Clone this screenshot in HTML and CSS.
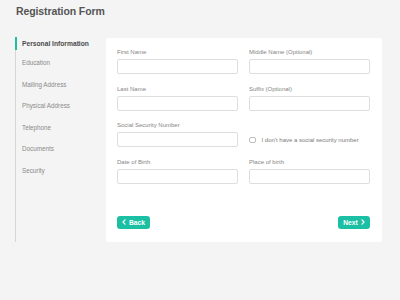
FILE: index.html
```html
<!DOCTYPE html>
<html>
<head>
<meta charset="utf-8">
<link rel="stylesheet" href="styles.css">
</head>
<body>
<h1 class="title">Registration Form</h1>
<div class="main">
  <nav class="sidebar">
    <div class="nav-item active">Personal Information</div>
    <div class="nav-item">Education</div>
    <div class="nav-item">Mailing Address</div>
    <div class="nav-item">Physical Address</div>
    <div class="nav-item">Telephone</div>
    <div class="nav-item">Documents</div>
    <div class="nav-item">Security</div>
  </nav>
  <section class="card">
    <div class="grid">
      <div class="field"><label class="label">First Name</label><div class="input"></div></div>
      <div class="field"><label class="label">Middle Name (Optional)</label><div class="input"></div></div>
      <div class="field"><label class="label">Last Name</label><div class="input"></div></div>
      <div class="field"><label class="label">Suffix (Optional)</label><div class="input"></div></div>
      <div class="field"><label class="label">Social Security Number</label><div class="input"></div></div>
      <div class="check-row"><span class="checkbox"></span><span class="check-text">I don't have a social security number</span></div>
      <div class="field"><label class="label">Date of Birth</label><div class="input"></div></div>
      <div class="field"><label class="label">Place of birth</label><div class="input"></div></div>
    </div>
    <div class="actions">
      <button class="btn btn-back"><svg class="chev" viewBox="0 0 4 6" width="4" height="6"><polyline points="3,0.8 1,3 3,5.2" fill="none" stroke="#fff" stroke-width="1.2" stroke-linecap="round" stroke-linejoin="round"/></svg>Back</button>
      <button class="btn btn-next">Next<svg class="chev" viewBox="0 0 4 6" width="4" height="6"><polyline points="1,0.8 3,3 1,5.2" fill="none" stroke="#fff" stroke-width="1.2" stroke-linecap="round" stroke-linejoin="round"/></svg></button>
    </div>
  </section>
</div>
</body>
</html>
```

FILE: styles.css
```css
* { box-sizing: border-box; }
html, body { margin: 0; padding: 0; }
body {
  width: 400px;
  height: 300px;
  background: #f4f4f4;
  font-family: "Liberation Sans", Arial, sans-serif;
  overflow: hidden;
}
.title {
  margin: 5px 0 0 16px;
  font-size: 10.5px;
  line-height: 12px;
  font-weight: bold;
  color: #555;
  letter-spacing: -0.1px;
}
.main {
  display: flex;
  margin-top: 20px;
  padding: 0 18px 0 15px;
}
.sidebar {
  width: 91px;
  border-left: 1px solid #d6d6d6;
  display: flex;
  flex-direction: column;
}
.nav-item {
  margin-left: -1px;
  border-left: 2px solid transparent;
  padding-left: 5px;
  font-size: 6.3px;
  line-height: 13px;
  color: #8a8a8a;
  margin-bottom: 8.6px;
}
.nav-item.active {
  border-left-color: #1bbfa3;
  color: #4a4a4a;
  font-weight: bold;
  font-size: 6.7px;
  margin-bottom: 6px;
}
.card {
  flex: 1;
  background: #fff;
  border-radius: 2px;
  padding: 10px 12px 13px 11px;
  margin-top: 1px;
}
.grid {
  display: grid;
  grid-template-columns: 121px 121px;
  column-gap: 11px;
  row-gap: 10.7px;
}
.field { display: flex; flex-direction: column; }
.label {
  font-size: 6px;
  line-height: 8px;
  color: #858585;
  margin-bottom: 3px;
}
.input {
  height: 15px;
  border: 1px solid #dedede;
  border-radius: 2px;
  background: #fff;
}
.check-row {
  align-self: end;
  height: 15px;
  display: flex;
  align-items: center;
}
.checkbox {
  width: 6.5px;
  height: 6.5px;
  border: 1px solid #bdbdbd;
  border-radius: 2px;
}
.check-text {
  margin-left: 6px;
  font-size: 6px;
  color: #7a7a7a;
}
.actions {
  display: flex;
  justify-content: space-between;
  margin-top: 32px;
}
.btn {
  height: 12.5px;
  border: none;
  border-radius: 3px;
  background: #1bbfa3;
  color: #fff;
  font-family: "Liberation Sans", Arial, sans-serif;
  font-weight: bold;
  font-size: 6.7px;
  display: flex;
  align-items: center;
  justify-content: center;
  gap: 3px;
  padding: 0;
}
.btn-back { width: 33px; }
.btn-next { width: 32px; }
.chev { display: block; }
```
